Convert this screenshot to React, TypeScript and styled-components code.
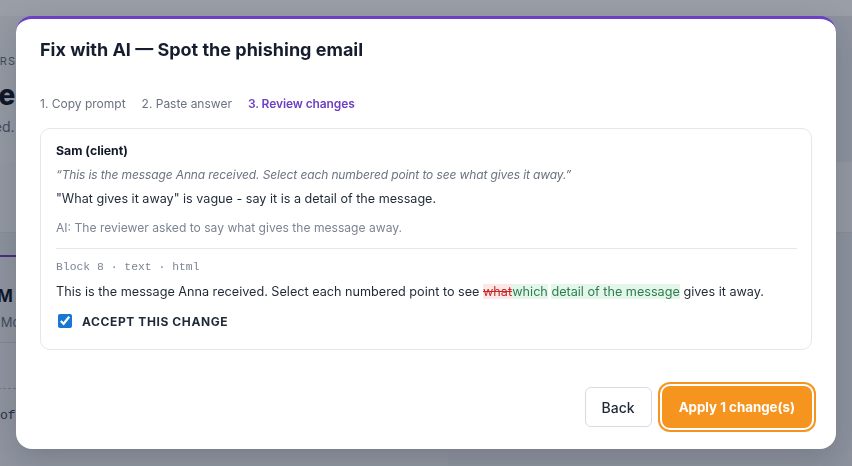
import styled, { createGlobalStyle } from "styled-components";

const GlobalStyle = createGlobalStyle`
  html, body {
    margin: 0;
    padding: 0;
  }
  body {
    font-family: Inter, "Noto Sans", sans-serif;
    background: #e8ebef;
    overflow: hidden;
  }
  * {
    box-sizing: border-box;
  }
`;

export default function App() {
  return (
    <>
      <GlobalStyle />
      <SPage>
        <SPageHeader />
        <SHero>
          <SEyebrow>TEACHERS</SEyebrow>
          <SHeroTitle>Order of the inbox</SHeroTitle>
          <SHeroText>Unlocked. Work through every scene in order.</SHeroText>
        </SHero>
        <SToolbar />
        <SLessonPanel>
          <SLessonTitle>PM · Phishing</SLessonTitle>
          <SLessonText>In Module 3 Anna gets a strange email.</SLessonText>
          <SLessonRule />
          <SLessonDashed />
          <SLessonCode>of the message</SLessonCode>
        </SLessonPanel>
      </SPage>

      <SOverlay>
        <SDialog>
          <STitle>Fix with AI — Spot the phishing email</STitle>
          <SSteps>
            <SStep>1. Copy prompt</SStep>
            <SStep>2. Paste answer</SStep>
            <SStep $active>3. Review changes</SStep>
          </SSteps>

          <SChangeCard>
            <SAuthor>Sam (client)</SAuthor>
            <SQuote>
              “This is the message Anna received. Select each numbered point to
              see what gives it away.”
            </SQuote>
            <SComment>
              "What gives it away" is vague - say it is a detail of the message.
            </SComment>
            <SAiNote>AI: The reviewer asked to say what gives the message away.</SAiNote>
            <SDivider />
            <SBlockMeta>Block 8 · text · html</SBlockMeta>
            <SDiffLine>
              This is the message Anna received. Select each numbered point to
              see <SRemoved>what</SRemoved>
              <SAdded>which</SAdded> <SAdded>detail of the message</SAdded> gives
              it away.
            </SDiffLine>
            <SAcceptRow>
              <input type="checkbox" checked readOnly />
              Accept this change
            </SAcceptRow>
          </SChangeCard>

          <SFooter>
            <SBackButton type="button">Back</SBackButton>
            <SApplyButton type="button">Apply 1 change(s)</SApplyButton>
          </SFooter>
        </SDialog>
      </SOverlay>
    </>
  );
}

/* page behind the dialog */

const SPage = styled.div`
  width: 852px;
  height: 466px;
  overflow: hidden;
  display: flex;
  flex-direction: column;
`;

const SPageHeader = styled.div`
  height: 16px;
  flex-shrink: 0;
  background: #ffffff;
`;

const SHero = styled.div`
  flex-shrink: 0;
  width: 640px;
  height: 146px;
  margin-left: -52px;
  padding-top: 38px;
  background: #f6f7f9;
`;

const SEyebrow = styled.div`
  font-size: 11px;
  line-height: 14px;
  letter-spacing: 0.12em;
  color: #6b7280;
`;

const SHeroTitle = styled.div`
  margin-top: 10px;
  font-size: 28px;
  line-height: 34px;
  font-weight: 800;
  color: #111827;
`;

const SHeroText = styled.div`
  margin-top: 5px;
  font-size: 14px;
  line-height: 20px;
  color: #6b7280;
`;

const SToolbar = styled.div`
  flex-shrink: 0;
  height: 71px;
  background: #f4f5f7;
  border-bottom: 1px solid #dfe3e8;
`;

const SLessonPanel = styled.div`
  flex: 1;
  width: 500px;
  margin: 22px 0 0 -52px;
  padding: 28px 0 0 38px;
  background: #eceef2;
  border-top: 2px solid #6d3fc4;
`;

const SLessonTitle = styled.div`
  font-size: 17px;
  line-height: 22px;
  font-weight: 700;
  color: #111827;
`;

const SLessonText = styled.div`
  margin-top: 6px;
  font-size: 13px;
  line-height: 18px;
  color: #6b7280;
`;

const SLessonRule = styled.div`
  margin: 11px 0 0 -38px;
  border-top: 1px solid #d4d8de;
`;

const SLessonDashed = styled.div`
  margin: 45px 0 0 -38px;
  border-top: 1px dashed #b8bec7;
`;

const SLessonCode = styled.div`
  margin-top: 19px;
  margin-left: 14px;
  font-family: "Liberation Mono", monospace;
  font-size: 13px;
  color: #374151;
`;

/* dialog */

const SOverlay = styled.div`
  position: fixed;
  inset: 0;
  display: flex;
  justify-content: center;
  align-items: flex-start;
  padding-top: 16px;
  background: rgba(15, 23, 42, 0.42);
`;

const SDialog = styled.div`
  width: 820px;
  height: 433px;
  display: flex;
  flex-direction: column;
  padding: 19px 24px 21px 24px;
  background: #ffffff;
  border-top: 3px solid #6d3fc4;
  border-radius: 16px;
  box-shadow: 0 10px 30px rgba(15, 23, 42, 0.18);
`;

const STitle = styled.h2`
  margin: 0;
  font-size: 18px;
  line-height: 24px;
  font-weight: 700;
  color: #161d2e;
`;

const SSteps = styled.div`
  display: flex;
  gap: 16px;
  margin-top: 33px;
`;

const SStep = styled.span<{ $active?: boolean }>`
  font-size: 12px;
  line-height: 18px;
  font-weight: ${(p) => (p.$active ? 600 : 400)};
  letter-spacing: ${(p) => (p.$active ? "-0.1px" : "0")};
  color: ${(p) => (p.$active ? "#6d3fc4" : "#6b7280")};
`;

const SChangeCard = styled.div`
  margin-top: 15px;
  padding: 12px 14px 18px 15px;
  border: 1px solid #e5e7eb;
  border-radius: 10px;
`;

const SAuthor = styled.div`
  font-size: 12.3px;
  line-height: 20px;
  font-weight: 700;
  color: #111827;
`;

const SQuote = styled.div`
  margin-top: 4px;
  font-size: 12px;
  line-height: 20px;
  letter-spacing: -0.12px;
  font-style: italic;
  color: #6b7280;
`;

const SComment = styled.div`
  margin-top: 4px;
  font-size: 12.6px;
  line-height: 20px;
  color: #1f2937;
`;

const SAiNote = styled.div`
  margin-top: 9px;
  font-size: 12.1px;
  line-height: 20px;
  color: #7c8594;
`;

const SDivider = styled.div`
  margin-top: 10px;
  border-top: 1px solid #e5e7eb;
`;

const SBlockMeta = styled.div`
  margin-top: 9px;
  font-family: "Liberation Mono", monospace;
  font-size: 11.4px;
  line-height: 18px;
  color: #7c8594;
`;

const SDiffLine = styled.div`
  margin-top: 6px;
  font-size: 12.65px;
  line-height: 20px;
  color: #1f2937;
`;

const SRemoved = styled.span`
  color: #c62828;
  background: #fde8e8;
  text-decoration: line-through;
`;

const SAdded = styled.span`
  color: #2e7d4f;
  background: #e4f6ea;
`;

const SAcceptRow = styled.label`
  display: flex;
  align-items: center;
  gap: 10px;
  margin-top: 9px;
  height: 20px;
  padding-left: 2px;
  font-size: 12px;
  font-weight: 700;
  letter-spacing: 0.05em;
  text-transform: uppercase;
  color: #1f2937;

  input {
    width: 14px;
    height: 14px;
    margin: 0;
    accent-color: #1976d2;
  }
`;

const SFooter = styled.div`
  display: flex;
  justify-content: flex-end;
  align-items: center;
  gap: 10px;
  margin-top: auto;
  height: 42px;
`;

const SBackButton = styled.button`
  height: 40px;
  padding: 0 16px;
  font-family: inherit;
  font-size: 14px;
  font-weight: 500;
  color: #1f2937;
  background: #ffffff;
  border: 1px solid #d5dce4;
  border-radius: 6px;
`;

const SApplyButton = styled.button`
  height: 42px;
  padding: 0 17px;
  font-family: inherit;
  font-size: 13.3px;
  font-weight: 700;
  color: #ffffff;
  background: #f5951f;
  border: none;
  border-radius: 8px;
  box-shadow: 0 0 0 2px #ffffff, 0 0 0 4px #f5951f;
`;
